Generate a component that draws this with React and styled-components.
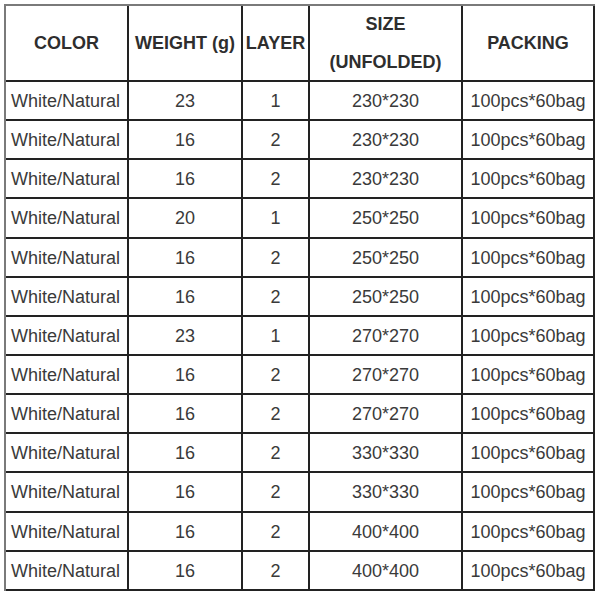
import React from 'react';
import styled, { createGlobalStyle } from 'styled-components';

const GlobalStyle = createGlobalStyle`
  body {
    margin: 0;
    background: #fff;
    font-family: "Liberation Sans", Arial, sans-serif;
  }
`;

const Grid = styled.div`
  display: grid;
  grid-template-columns: 123px 114px 67px 153px 132px;
  grid-template-rows: 76px;
  grid-auto-rows: 39.15px;
  width: max-content;
  margin: 4px 0 0 4px;
  border-top: 2px solid #7a7a7a;
  border-left: 2px solid #7a7a7a;
`;

const Cell = styled.div`
  box-sizing: border-box;
  display: flex;
  align-items: center;
  justify-content: ${(p) => (p.$left ? 'flex-start' : 'center')};
  padding: ${(p) => (p.$left ? '2px 0 0 5px' : '2px 0 0 0')};
  border-right: 2px solid #222;
  border-bottom: 2px solid #222;
  font-size: 18px;
  color: #3a3a3a;
  white-space: nowrap;
`;

const HeadCell = styled(Cell)`
  flex-direction: column;
  font-weight: bold;
  color: #2e2e2e;
  line-height: 38px;
  padding: 0;
  text-align: center;
`;

const headers = [['COLOR'], ['WEIGHT (g)'], ['LAYER'], ['SIZE', '(UNFOLDED)'], ['PACKING']];

const rows = [
  [23, 1, '230*230'],
  [16, 2, '230*230'],
  [16, 2, '230*230'],
  [20, 1, '250*250'],
  [16, 2, '250*250'],
  [16, 2, '250*250'],
  [23, 1, '270*270'],
  [16, 2, '270*270'],
  [16, 2, '270*270'],
  [16, 2, '330*330'],
  [16, 2, '330*330'],
  [16, 2, '400*400'],
  [16, 2, '400*400'],
];

export default function App() {
  return (
    <>
      <GlobalStyle />
      <Grid>
        {headers.map((lines, i) => (
          <HeadCell key={i}>
            {lines.map((l) => (
              <span key={l}>{l}</span>
            ))}
          </HeadCell>
        ))}
        {rows.map(([weight, layer, size], i) => (
          <React.Fragment key={i}>
            <Cell $left>White/Natural</Cell>
            <Cell>{weight}</Cell>
            <Cell>{layer}</Cell>
            <Cell>{size}</Cell>
            <Cell>100pcs*60bag</Cell>
          </React.Fragment>
        ))}
      </Grid>
    </>
  );
}
